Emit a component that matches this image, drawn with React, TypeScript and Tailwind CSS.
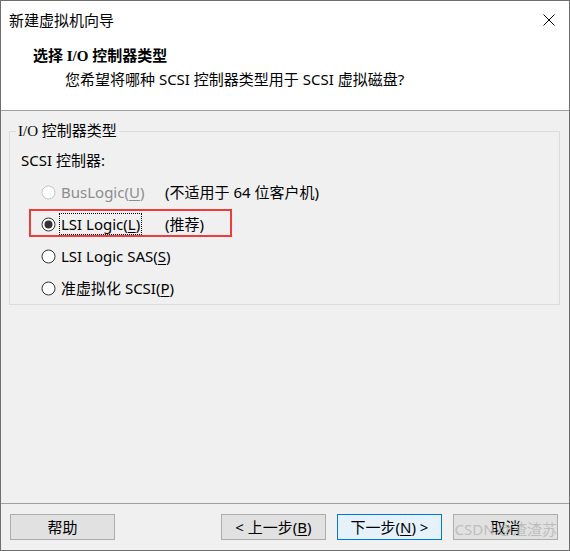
import type { ReactNode } from "react";

const sans = "font-['Noto_Sans','Noto_Sans_CJK_SC',sans-serif]";
const serifMix = "font-['Liberation_Serif','Noto_Sans_CJK_SC',serif]";

const Radio = ({ checked, disabled }: { checked?: boolean; disabled?: boolean }) => (
  <svg width="15" height="15" viewBox="0 0 15 15" className="shrink-0">
    <circle
      cx="7.5"
      cy="7.5"
      r="6.5"
      fill="#ffffff"
      stroke={disabled ? "#c4c4c4" : "#333333"}
      strokeWidth="1"
    />
    {checked && <circle cx="7.5" cy="7.5" r="4" fill="#333333" />}
  </svg>
);

const Key = ({ children }: { children: ReactNode }) => (
  <span className="underline underline-offset-2 decoration-1">{children}</span>
);

type Option = {
  label: ReactNode;
  note?: string;
  checked?: boolean;
  disabled?: boolean;
  focused?: boolean;
  marked?: boolean;
};

const options: Option[] = [
  {
    label: (
      <>
        BusLogic(<Key>U</Key>)
      </>
    ),
    note: "(不适用于 64 位客户机)",
    disabled: true,
  },
  {
    label: (
      <>
        LSI Logic(<Key>L</Key>)
      </>
    ),
    note: "(推荐)",
    checked: true,
    focused: true,
    marked: true,
  },
  {
    label: (
      <>
        LSI Logic SAS(<Key>S</Key>)
      </>
    ),
  },
  {
    label: (
      <>
        准虚拟化 SCSI(<Key>P</Key>)
      </>
    ),
  },
];

const OptionRow = ({ option }: { option: Option }) => (
  <div className="relative flex h-[32px] items-center whitespace-nowrap pl-[31px]">
    {option.marked && (
      <div className="absolute left-[19px] top-[1px] h-[28px] w-[203px] border-2 border-[#ee3b3b]" />
    )}
    <Radio checked={option.checked} disabled={option.disabled} />
    <div className="ml-[3px] min-w-[106px] shrink-0">
      <span
        className={`inline-block border px-[1px] leading-[20px] ${
          option.focused ? "border-dotted border-black" : "border-transparent"
        } ${option.disabled ? "text-[#8d8d8d]" : "text-black"}`}
      >
        {option.label}
      </span>
    </div>
    {option.note && <span className="leading-[20px] text-black">{option.note}</span>}
  </div>
);

const Button = ({
  children,
  primary,
  className = "",
}: {
  children: ReactNode;
  primary?: boolean;
  className?: string;
}) => (
  <div
    className={`flex h-[26px] w-[105px] items-center justify-center whitespace-nowrap border text-[15px] leading-[20px] text-black ${
      primary ? "border-[#0078d7] bg-[#e5f1fb]" : "border-[#adadad] bg-[#e1e1e1]"
    } ${className}`}
  >
    {children}
  </div>
);

export default function App() {
  return (
    <div
      className={`flex h-[551px] w-[570px] flex-col border border-[#6f6f6f] bg-[#f0f0f0] text-[15px] text-black ${sans}`}
    >
      {/* title + header */}
      <div className="h-[110px] shrink-0 border-b border-[#a0a0a0] bg-white">
        <div className="flex h-[37px] items-center justify-between pl-[8px] pr-[14px]">
          <span className="leading-[20px]">新建虚拟机向导</span>
          <svg width="12" height="12" viewBox="0 0 12 12">
            <path d="M0.5 0.5L11.5 11.5M11.5 0.5L0.5 11.5" stroke="#000" strokeWidth="1" />
          </svg>
        </div>
        <div className={`mt-[8px] pl-[32px] font-bold leading-[20px] ${serifMix}`}>
          选择 I/O 控制器类型
        </div>
        <div className="mt-[3px] pl-[64px] leading-[20px]">
          您希望将哪种 SCSI 控制器类型用于 SCSI 虚拟磁盘?
        </div>
      </div>

      {/* body */}
      <div className="flex-1">
        <fieldset className="ml-[8px] mr-[9px] mt-[10px] border border-[#dcdcdc]">
          <legend className={`ml-[6px] px-[2px] leading-[20px] ${serifMix}`}>I/O 控制器类型</legend>
          <div className="mt-[9px] pl-[11px] leading-[20px]">SCSI 控制器:</div>
          <div className="mt-[6px]">
            {options.map((option, i) => (
              <OptionRow key={i} option={option} />
            ))}
          </div>
        </fieldset>
      </div>

      {/* footer */}
      <div className="flex shrink-0 items-center justify-between border-t border-[#a0a0a0] pb-[10px] pl-[9px] pr-[11px] pt-[10px]">
        <Button>帮助</Button>
        <div className="flex gap-[11px]">
          <Button>
            &lt; 上一步(<Key>B</Key>)
          </Button>
          <Button primary>
            下一步(<Key>N</Key>) &gt;
          </Button>
          <div className="relative">
            <Button>取消</Button>
            <span className="pointer-events-none absolute right-[1px] top-[4px] whitespace-nowrap text-[15px] leading-[22px] text-[#b4b4b4]/80">
              CSDN @渣渣苏
            </span>
          </div>
        </div>
      </div>
    </div>
  );
}
